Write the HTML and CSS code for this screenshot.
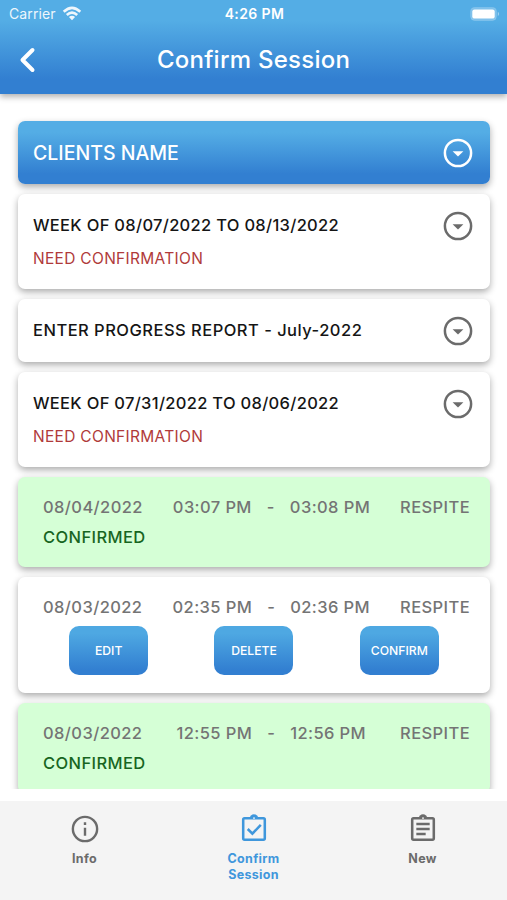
FILE: index.html
```
<!DOCTYPE html>
<html lang="en">

<head>
    <meta charset="utf-8"/>
    <meta name="viewport" content="width=device-width, initial-scale=1.0">
    <title>Confirm Session</title>
    <link rel="stylesheet" href="styles.css">
</head>
<body>
    <svg class="defs" width="0" height="0">
        <symbol id="icon-drop" viewBox="0 0 30 30">
            <circle cx="15" cy="15" r="13.1" fill="none" stroke="currentColor" stroke-width="2.5"/>
            <path d="M9.6 13.2h10.8L15 18.6z" fill="currentColor"/>
        </symbol>
    </svg>
    <header class="header">
        <div class="status-bar">
            <div class="carrier">
                <span>Carrier</span>
                <svg width="20" height="15" viewBox="0 0 20 15" fill="none" stroke="#fff" stroke-width="2.6">
                    <path d="M1.7 5.8Q10-2.1 18.3 5.8"/>
                    <path d="M4.8 9Q10 4.1 15.2 9"/>
                    <path d="M10 14.2l-3.1-3.1q3.1-2.7 6.2 0z" fill="#fff" stroke="none"/>
                </svg>
            </div>
            <div class="clock">4:26 PM</div>
            <div class="battery">
                <svg width="30" height="14" viewBox="0 0 30 14">
                    <rect x=".6" y=".6" width="25.8" height="12.8" rx="4" fill="#fff" fill-opacity=".25" stroke="#fff" stroke-opacity=".15"/>
                    <rect x="2.3" y="2.4" width="22.4" height="9.2" rx="2.2" fill="#fff"/>
                    <path d="M27.8 4.8q2.6 2.2 0 4.4z" fill="#fff" fill-opacity=".45"/>
                </svg>
            </div>
        </div>
        <div class="nav-bar">
            <svg class="back" width="18" height="28" viewBox="0 0 18 28" fill="none" stroke="#fff" stroke-width="4" stroke-linecap="round" stroke-linejoin="round">
                <path d="M14.5 4L4.5 14l10 10"/>
            </svg>
            <h1>Confirm Session</h1>
        </div>
    </header>

    <main class="list">
        <div class="card client">
            <h2>CLIENTS NAME</h2>
            <svg class="drop"><use href="#icon-drop"/></svg>
        </div>
        <div class="card week">
            <div>
                <h3>WEEK OF 08/07/2022 TO 08/13/2022</h3>
                <p class="need">NEED CONFIRMATION</p>
            </div>
            <svg class="drop"><use href="#icon-drop"/></svg>
        </div>
        <div class="card report">
            <h3>ENTER PROGRESS REPORT - July-2022</h3>
            <svg class="drop"><use href="#icon-drop"/></svg>
        </div>
        <div class="card week">
            <div>
                <h3>WEEK OF 07/31/2022 TO 08/06/2022</h3>
                <p class="need">NEED CONFIRMATION</p>
            </div>
            <svg class="drop"><use href="#icon-drop"/></svg>
        </div>
        <div class="card session confirmed">
            <div class="row">
                <span>08/04/2022</span>
                <div class="times"><span>03:07 PM</span><span>-</span><span>03:08 PM</span></div>
                <span>RESPITE</span>
            </div>
            <p class="state">CONFIRMED</p>
        </div>
        <div class="card session pending">
            <div class="row">
                <span>08/03/2022</span>
                <div class="times"><span>02:35 PM</span><span>-</span><span>02:36 PM</span></div>
                <span>RESPITE</span>
            </div>
            <div class="actions">
                <button type="button">EDIT</button>
                <button type="button">DELETE</button>
                <button type="button">CONFIRM</button>
            </div>
        </div>
        <div class="card session confirmed">
            <div class="row">
                <span>08/03/2022</span>
                <div class="times"><span>12:55 PM</span><span>-</span><span>12:56 PM</span></div>
                <span>RESPITE</span>
            </div>
            <p class="state">CONFIRMED</p>
        </div>
    </main>

    <nav class="tabs">
        <a class="tab">
            <svg width="32" height="32" viewBox="0 0 24 24" fill="none" stroke="currentColor" stroke-width="1.8">
                <circle cx="12" cy="12" r="9.1"/>
                <path d="M12 11v6M12 7v2"/>
            </svg>
            <span>Info</span>
        </a>
        <a class="tab active">
            <svg width="32" height="32" viewBox="0 0 24 24" fill="none" stroke="currentColor" stroke-width="1.9">
                <rect x="3.9" y="4" width="16.2" height="16" rx="1"/>
                <path d="M7.3 12l3.5 3.5 6.3-6.6"/>
                <path d="M8.8 4a3.2 3 0 0 1 6.4 0z" fill="currentColor" stroke="none"/>
                <circle cx="12" cy="3.8" r=".7" fill="#f4f4f4" stroke="none"/>
            </svg>
            <span>Confirm<br>Session</span>
        </a>
        <a class="tab">
            <svg width="32" height="32" viewBox="0 0 24 24" fill="none" stroke="currentColor" stroke-width="1.9">
                <rect x="3.9" y="4" width="16.2" height="16" rx="1"/>
                <path d="M7 8.2h10M7 12h10M7 15.8h7"/>
                <path d="M8.8 4a3.2 3 0 0 1 6.4 0z" fill="currentColor" stroke="none"/>
                <circle cx="12" cy="3.8" r=".7" fill="#f4f4f4" stroke="none"/>
            </svg>
            <span>New</span>
        </a>
    </nav>
</body>
</html>
```

FILE: styles.css
```
* {
    box-sizing: border-box;
}
body {
    margin: 0;
    height: 900px;
    display: flex;
    flex-direction: column;
    overflow: hidden;
    background: #fff;
    font-family: Inter, "Liberation Sans", sans-serif;
}
h1, h2, h3, p {
    margin: 0;
    font-weight: 500;
}
.defs {
    position: absolute;
}
.header {
    flex: none;
    height: 94px;
    color: #fff;
    background: linear-gradient(#54ade5 0%, #54ade5 22%, #327fd1 84%, #327fd1 100%);
    box-shadow: 0 3px 6px rgba(0, 0, 0, 0.3);
}
.status-bar {
    height: 27px;
    padding: 0 7px 0 9px;
    display: grid;
    grid-template-columns: 1fr auto 1fr;
    align-items: center;
    font-size: 14px;
    letter-spacing: 0.1px;
}
.carrier {
    display: flex;
    align-items: center;
    gap: 6px;
    opacity: 0.9;
}
.clock {
    font-weight: 600;
    letter-spacing: 0.4px;
}
.battery {
    display: flex;
    justify-content: flex-end;
}
.nav-bar {
    height: 65px;
    padding: 0 18px;
    display: grid;
    grid-template-columns: 30px 1fr 30px;
    align-items: center;
}
.nav-bar h1 {
    font-size: 24px;
    letter-spacing: 0.25px;
    text-align: center;
}
.list {
    flex: none;
    height: 695px;
    padding: 27px 17px 0 18px;
    display: flex;
    flex-direction: column;
    gap: 10px;
    overflow: hidden;
}
.card {
    flex: none;
    border-radius: 7px;
    background: #fff;
    box-shadow: 0 3px 7px rgba(0, 0, 0, 0.33);
}
.client, .week, .report {
    display: flex;
    justify-content: space-between;
    padding: 0 17px 0 15px;
    color: #6b6b6b;
}
.client {
    height: 63px;
    align-items: center;
    color: #fff;
    background: linear-gradient(#54ade5 0%, #54ade5 18%, #327fd1 84%, #327fd1 100%);
}
.client h2 {
    font-size: 19.5px;
}
.drop {
    flex: none;
    width: 30px;
    height: 30px;
}
.week {
    height: 95px;
    padding-top: 17px;
}
.report {
    height: 63px;
    align-items: center;
}
h3 {
    font-size: 16.5px;
    line-height: 29px;
    letter-spacing: 0.3px;
    color: #151515;
}
.report h3 {
    letter-spacing: 0.48px;
}
.need {
    margin-top: 9px;
    font-size: 15.5px;
    line-height: 20px;
    font-weight: 400;
    letter-spacing: 0.3px;
    color: #b03a3a;
}
.session {
    color: #747474;
    font-size: 16.5px;
    font-weight: 450;
    letter-spacing: 0.4px;
}
.session.confirmed {
    height: 90px;
    background: #d5ffd6;
}
.pending {
    height: 116px;
}
.row {
    display: flex;
    justify-content: space-between;
    padding: 19px 20px 0 25px;
    line-height: 22px;
}
.times {
    display: flex;
    gap: 15px;
}
.state {
    padding: 8px 25px 0;
    line-height: 22px;
    font-weight: 450;
    color: #17651f;
}
.actions {
    display: flex;
    justify-content: space-around;
    padding: 8px 18px 0;
}
.actions button {
    width: 79px;
    height: 49px;
    padding: 0;
    border: none;
    border-radius: 10px;
    background: linear-gradient(#4ea8e2 0%, #4ea8e2 15%, #327fd1 90%);
    color: #fff;
    font-family: inherit;
    font-size: 12.2px;
    font-weight: 450;
}
.tabs {
    flex: none;
    height: 99px;
    margin-top: 12px;
    padding-top: 12px;
    display: grid;
    grid-template-columns: repeat(3, 1fr);
    background: #f4f4f4;
}
.tab {
    display: flex;
    flex-direction: column;
    align-items: center;
    gap: 6px;
    color: #6b6b6b;
    font-size: 12.5px;
    line-height: 16px;
    font-weight: 650;
    letter-spacing: 0.3px;
    text-align: center;
}
.tab.active {
    color: #3f97dc;
}
```
